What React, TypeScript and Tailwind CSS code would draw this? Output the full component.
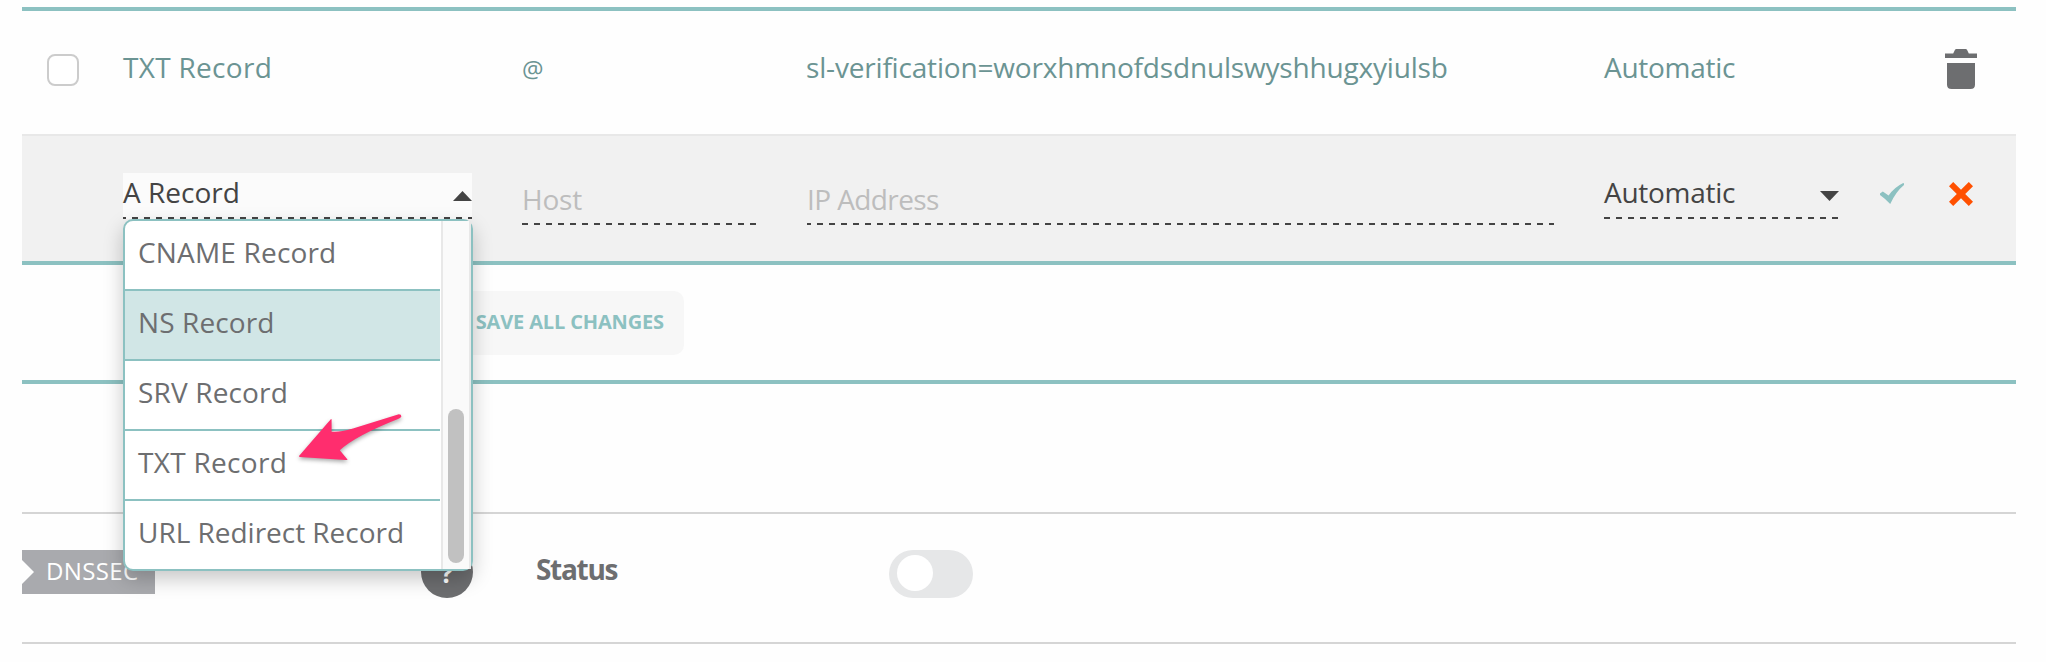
import React from "react";

const dashes = "bg-[repeating-linear-gradient(to_right,#444_0_6px,transparent_6px_12px)]";

const menuItems = [
  { label: "CNAME Record", tracking: "tracking-[0.18px]" },
  { label: "NS Record", tracking: "tracking-[0.1px]", active: true },
  { label: "SRV Record", tracking: "tracking-[0.15px]" },
  { label: "TXT Record", tracking: "tracking-[0.3px]" },
  { label: "URL Redirect Record", tracking: "tracking-[-0.02px]" },
];

function TrashIcon() {
  return (
    <svg width="32" height="40" viewBox="0 0 32 40" fill="#6d6e70">
      <path d="M0 4.6H8.2L10 .8Q10.4 0 11.3 0H20.7Q21.6 0 22 .8L23.8 4.6H32V9H0Z" />
      <path d="M2 14H30V35.5Q30 40 25.5 40H6.5Q2 40 2 35.5Z" />
    </svg>
  );
}

function CheckIcon() {
  return (
    <svg width="24" height="21" viewBox="0 0 24 21" fill="#8cc1c1">
      <path d="M0 10.4L2.8 8.6L8.6 12.4Q14.5 4.2 23.2 0L24 .4V2Q16 8.5 10.2 21Q5 15.5 0 12Z" />
    </svg>
  );
}

function CrossIcon() {
  return (
    <svg width="24" height="24" viewBox="0 0 24 24" fill="#ff5000">
      <path d="M0 4.2L4.2 0L12 7.8L19.8 0L24 4.2L16.2 12L24 19.8L19.8 24L12 16.2L4.2 24L0 19.8L7.8 12Z" />
    </svg>
  );
}

function PointerArrow() {
  return (
    <svg
      className="absolute left-[176px] top-[195px] overflow-visible drop-shadow-[0_2px_2px_rgba(0,0,0,0.35)]"
      width="108"
      height="52"
      viewBox="0 0 108 52"
      fill="#ff2d6e"
    >
      <path d="M0 42L31.8 5.2Q32.5 4.7 32.6 5.7V17.7Q40 18.5 54 14.5L99 .4Q102.4 0 102.4 2.500Q101.500 4 99 5Q56 22 40.8 36.300L48.5 45.5Q48.2 46.3 46.5 46L.5 43Z" />
    </svg>
  );
}

function RecordMenu() {
  return (
    <div className="absolute left-0 top-[46px] z-10 h-[352px] w-[350px]">
      <div className="flex h-full rounded-[10px] border-2 border-[#8cc1c1] bg-white shadow-[0_8px_20px_rgba(0,0,0,0.22)]">
        <ul className="w-[315px] shrink-0">
          {menuItems.map((item, i) => (
            <li
              key={item.label}
              className={`h-[70px] pl-[13px] leading-[62px] text-[#6d6e70] ${item.tracking} ${
                i < menuItems.length - 1 ? "border-b-2 border-[#8cc1c1]" : ""
              } ${item.active ? "bg-[#d1e6e6]" : ""}`}
            >
              {item.label}
            </li>
          ))}
        </ul>
        <div className="ml-px flex h-full grow items-end justify-center border-x-2 border-[#e8e8e8] bg-[#fafafa] pb-[6px]">
          <div className="h-[154px] w-4 rounded-full bg-[#c1c1c1]" />
        </div>
      </div>
      <PointerArrow />
    </div>
  );
}

export default function App() {
  return (
    <div className="h-[662px] w-[2046px] overflow-hidden bg-[#fefefe] pl-[22px] pt-[7px] font-['Open_Sans',sans-serif] text-[28px] text-[#444]">
      <main className="w-[1994px]">
        <section className="flex h-[129px] border-b-2 border-t-4 border-b-[#e8e8e8] border-t-[#8cc1c1] leading-[112px] text-[#6b9493]">
          <div className="w-[101px] pl-[25px] pt-[43px]">
            <div className="h-8 w-8 rounded-lg border-2 border-[#ccc] bg-white" />
          </div>
          <div className="w-[399px] tracking-[0.3px]">TXT Record</div>
          <div className="w-[284px] text-[24px] leading-[115px]">@</div>
          <div className="w-[798px] tracking-[-0.18px]">sl-verification=worxhmnofdsdnulswyshhugxyiulsb</div>
          <div className="w-[341px] tracking-[-0.28px]">Automatic</div>
          <div className="pt-[38px]">
            <TrashIcon />
          </div>
        </section>

        <section className="flex h-[129px] border-b-4 border-[#8cc1c1] bg-[#f1f1f1] pl-[101px] pt-[37px] leading-[38px]">
          <div className="relative mr-[50px] h-[46px] w-[349px] bg-[#fbfbfb]">
            <div className="flex h-[44px] justify-between">
              <span>A Record</span>
              <svg className="mt-[18px]" width="19" height="10" viewBox="0 0 19 10" fill="#444">
                <path d="M9.5 0L19 10H0Z" />
              </svg>
            </div>
            <div className={`h-[2px] bg-[position:-3px_0] ${dashes}`} />
            <RecordMenu />
          </div>
          <div className="mr-[51px] w-[234px] pt-[7px] text-[#bdbdbd]">
            <div className="h-[43px] tracking-[-0.2px]">Host</div>
            <div className={`h-[2px] ${dashes}`} />
          </div>
          <div className="mr-[50px] w-[747px] pt-[7px] text-[#bdbdbd]">
            <div className="h-[43px] tracking-[-0.6px]">IP Address</div>
            <div className={`h-[2px] bg-[position:-2px_0] ${dashes}`} />
          </div>
          <div className="mr-[41px] w-[235px]">
            <div className="flex h-[44px] justify-between">
              <span className="tracking-[-0.28px]">Automatic</span>
              <svg className="mt-[18px]" width="19" height="10" viewBox="0 0 19 10" fill="#444">
                <path d="M0 0H19L9.5 10Z" />
              </svg>
            </div>
            <div className={`h-[2px] ${dashes}`} />
          </div>
          <div className="mr-[45px] pt-[10px]">
            <CheckIcon />
          </div>
          <div className="pt-[9px]">
            <CrossIcon />
          </div>
        </section>

        <section className="flex h-[119px] border-b-4 border-[#8cc1c1] pl-[101px] pt-[26px]">
          <button className="h-[64px] w-[561px] rounded-[10px] bg-[#f7f7f7] pb-[2px] pr-[20px] text-right text-[20px] font-bold leading-[60px] tracking-[-0.14px] text-[#8cc1c1]">
            SAVE ALL CHANGES
          </button>
        </section>

        <section className="mt-[128px] flex h-[132px] border-y-2 border-[#d5d5d5] pt-[36px]">
          <div className="flex h-[44px] w-[133px] items-start bg-[#a9aaae] text-[24px] leading-[41px] text-white">
            <svg className="mt-[10px]" width="12" height="24" viewBox="0 0 12 24" fill="#fefefe">
              <path d="M0 0L12 12L0 24Z" />
            </svg>
            <span className="pl-3 tracking-[0.38px]">DNSSEC</span>
          </div>
          <div className="ml-[266px] mt-[-4px] h-[52px] w-[52px] rounded-full bg-[#6d6e70] text-center text-[26px] font-bold leading-[54px] text-white">
            ?
          </div>
          <div className="ml-[63px] w-[353px] font-bold leading-[38px] tracking-[-1.3px] text-[#6d6e70]">Status</div>
          <div className="h-12 w-[84px] rounded-full bg-[#e6e7e8] pl-2 pt-[5px]">
            <div className="h-9 w-9 rounded-full bg-white" />
          </div>
        </section>
      </main>
    </div>
  );
}
